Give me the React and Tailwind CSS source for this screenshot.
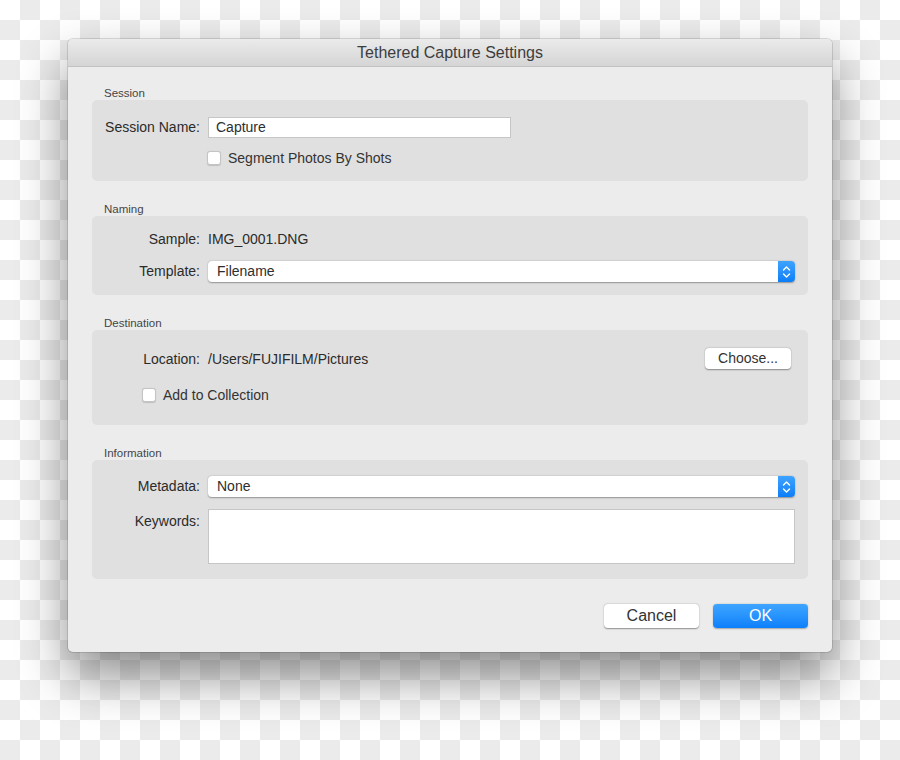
import React from "react";

function Stepper() {
  return (
    <div className="w-[17px] h-full rounded-r-[4px] bg-gradient-to-b from-[#3ea3ff] to-[#0a7ef7] flex items-center justify-center">
      <svg width="9" height="14" viewBox="0 0 9 14" fill="none" stroke="white" strokeWidth="1.4" strokeLinecap="round" strokeLinejoin="round">
        <path d="M1.5 5 L4.5 2 L7.5 5" />
        <path d="M1.5 9 L4.5 12 L7.5 9" />
      </svg>
    </div>
  );
}

function Select({ value }) {
  return (
    <div className="ml-[8px] flex-1 h-[21px] flex items-stretch bg-white rounded-[4px] shadow-[0_0.5px_1.5px_rgba(0,0,0,0.35)]">
      <div className="flex-1 pl-[9px] flex items-center text-[14px] text-[#2e2e2e]">{value}</div>
      <Stepper />
    </div>
  );
}

function Checkbox({ label }) {
  return (
    <div className="flex items-center h-[18px]">
      <div className="w-[14px] h-[14px] bg-white rounded-[3px] border border-[#c4c4c4] shadow-[0_0.5px_1px_rgba(0,0,0,0.15)]" />
      <span className="ml-[7px] text-[14px] text-[#333]">{label}</span>
    </div>
  );
}

function Label({ children, className = "" }) {
  return <div className={`w-[108px] text-right text-[14px] text-[#2b2b2b] ${className}`}>{children}</div>;
}

function Section({ title, children, className = "" }) {
  return (
    <div>
      <div className="h-[13px] leading-[13px] pl-[12px] text-[11.5px] text-[#454545]">{title}</div>
      <div className={`rounded-[5px] bg-[#e0e0e0] pr-[13px] ${className}`}>{children}</div>
    </div>
  );
}

export default function App() {
  return (
    <div className="w-[900px] h-[760px] overflow-hidden pt-[39px] pl-[68px] bg-[image:repeating-conic-gradient(#ebebeb_0_25%,#ffffff_0_50%)] bg-[length:40px_40px] font-['Liberation_Sans',Arial,sans-serif]">
      <div className="w-[764px] h-[613px] rounded-[5px] bg-[#ececec] shadow-[0_24px_50px_rgba(0,0,0,0.45),0_0_0_1px_rgba(0,0,0,0.12)] overflow-hidden flex flex-col">
        <div className="h-[28px] shrink-0 border-b border-[#c2c2c2] bg-gradient-to-b from-[#ebebeb] to-[#d5d5d5] flex items-center justify-center text-[16px] text-[#3d3d3d]">
          Tethered Capture Settings
        </div>

        <div className="px-[24px] pt-[20px] flex flex-col">
          <Section title="Session" className="pt-[16px] pb-[14px]">
            <div className="flex items-center h-[21px] pt-[1px]">
              <Label>Session Name:</Label>
              <div className="ml-[8px] w-[303px] h-[21px] bg-white border border-[#c6c6c6] pl-[7px] flex items-center text-[14px] text-[#2e2e2e]">
                Capture
              </div>
            </div>
            <div className="mt-[12px] pl-[115px]">
              <Checkbox label="Segment Photos By Shots" />
            </div>
          </Section>

          <div className="mt-[22px]">
            <Section title="Naming" className="pt-[13px] pb-[13px]">
              <div className="flex items-center h-[21px] pb-[1px]">
                <Label>Sample:</Label>
                <span className="ml-[8px] text-[14px] text-[#2b2b2b]">IMG_0001.DNG</span>
              </div>
              <div className="mt-[11px] flex items-center h-[21px]">
                <Label>Template:</Label>
                <Select value="Filename" />
              </div>
            </Section>
          </div>

          <div className="mt-[22px]">
            <Section title="Destination" className="pt-[18px] pb-[21px]">
              <div className="flex items-center h-[21px]">
                <Label className="pt-[1px]">Location:</Label>
                <span className="ml-[8px] pt-[1px] flex-1 text-[14px] text-[#2b2b2b]">/Users/FUJIFILM/Pictures</span>
                <div className="mr-[4px] w-[86px] h-[21px] rounded-[4px] bg-white shadow-[0_0.5px_1.5px_rgba(0,0,0,0.4)] flex items-center justify-center text-[14px] text-[#333]">
                  Choose...
                </div>
              </div>
              <div className="mt-[17px] pl-[50px]">
                <Checkbox label="Add to Collection" />
              </div>
            </Section>
          </div>

          <div className="mt-[22px]">
            <Section title="Information" className="pt-[16px] pb-[15px]">
              <div className="flex items-center h-[21px]">
                <Label>Metadata:</Label>
                <Select value="None" />
              </div>
              <div className="mt-[12px] flex items-start">
                <Label className="pt-[2px]">Keywords:</Label>
                <div className="ml-[8px] flex-1 h-[55px] bg-white border border-[#c6c6c6]" />
              </div>
            </Section>
          </div>

          <div className="mt-[25px] flex justify-end gap-[14px]">
            <div className="w-[95px] h-[24px] rounded-[4px] bg-white shadow-[0_0.5px_1.5px_rgba(0,0,0,0.4)] flex items-center justify-center text-[16px] text-[#333]">
              Cancel
            </div>
            <div className="w-[95px] h-[24px] rounded-[4px] bg-gradient-to-b from-[#3da5ff] to-[#0b80fb] shadow-[0_0.5px_1.5px_rgba(0,0,0,0.3)] flex items-center justify-center text-[16px] text-white">
              OK
            </div>
          </div>
        </div>
      </div>
    </div>
  );
}
